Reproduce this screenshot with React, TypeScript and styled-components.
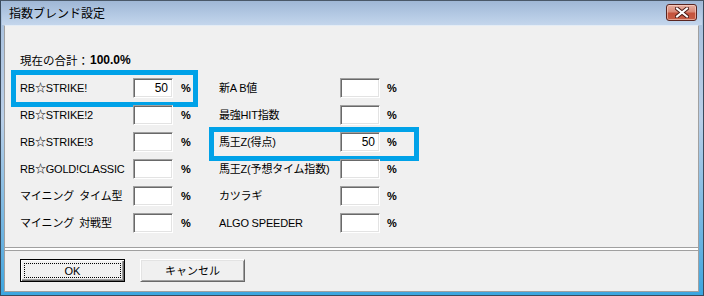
import React from "react";
import styled, { createGlobalStyle } from "styled-components";

const Global = createGlobalStyle`
  html, body { margin: 0; padding: 0; background: #ffffff; }
  body { width: 704px; height: 296px; overflow: hidden; }
  * { box-sizing: border-box; }
`;

const FONT = `"Liberation Sans", "Noto Sans CJK JP", sans-serif`;

const Frame = styled.div`
  width: 704px;
  height: 296px;
  display: flex;
  flex-direction: column;
  padding: 0 4px 3px 3px;
  background: linear-gradient(to bottom, #a7bfdc 0%, #b9cfe8 40%, #63b0e0 85%, #3ba6e0 100%);
  border: 1px solid #3a4a5c;
  border-top-color: #4a5868;
  font-family: ${FONT};
  font-size: 12px;
  color: #000;
`;

const TitleBar = styled.div`
  height: 24px;
  flex: 0 0 24px;
  margin: 0 -3px 0 -2px;
  padding: 0 5px 0 7px;
  display: flex;
  align-items: center;
  justify-content: space-between;
  background: linear-gradient(to bottom, #9fb7d5 0%, #b1c7e2 50%, #c4d6ec 100%);
`;

const Title = styled.span`
  font-family: "Noto Sans CJK JP", sans-serif;
  font-size: 12px;
  color: #000;
  line-height: 14px;
  margin-top: -1px;
`;

const CloseButton = styled.div`
  width: 31px;
  height: 17px;
  margin-top: -2px;
  border: 1px solid #5a2520;
  border-radius: 3px;
  background: linear-gradient(to bottom, #e7aea0 0%, #d98a78 45%, #c4523c 55%, #c65d45 100%);
  box-shadow: inset 0 0 0 1px rgba(255, 220, 210, 0.55);
  display: flex;
  align-items: center;
  justify-content: center;
`;

const Client = styled.div`
  flex: 1;
  display: flex;
  flex-direction: column;
  background: #f0f0f0;
  border: 1px solid #a0a0a0;
  border-top: 1px solid #e4ecf5;
`;

const Content = styled.div`
  flex: 1;
  padding: 27px 0 0 15px;
`;

const Summary = styled.div`
  font-family: "Noto Sans CJK JP", sans-serif;
  font-size: 11.5px;
  line-height: 14px;
  height: 14px;
  display: flex;
  align-items: center;
`;

const Total = styled.b`
  font-family: ${FONT};
  font-size: 12px;
  font-weight: bold;
  margin-left: 1px;
`;

const Columns = styled.div`
  margin-top: 11px;
  display: flex;
`;

const Column = styled.div<{ $width: number }>`
  width: ${(p) => p.$width}px;
  display: flex;
  flex-direction: column;
  gap: 7px;
`;

type Box = { t: number; r: number; b: number; l: number };

const Row = styled.div<{ $label: number; $gap: number; $hl?: Box }>`
  position: relative;
  height: 20px;
  display: grid;
  grid-template-columns: ${(p) => p.$label}px 40px auto;
  align-items: center;
  &::after {
    content: "";
    display: ${(p) => (p.$hl ? "block" : "none")};
    position: absolute;
    top: ${(p) => p.$hl?.t ?? 0}px;
    right: ${(p) => p.$hl?.r ?? 0}px;
    bottom: ${(p) => p.$hl?.b ?? 0}px;
    left: ${(p) => p.$hl?.l ?? 0}px;
    border: 5px solid #00a2e8;
    pointer-events: none;
  }
  & > span:last-child {
    padding-left: ${(p) => p.$gap}px;
  }
`;

const Label = styled.span`
  white-space: pre;
  line-height: 14px;
  font-family: ${FONT};
  font-size: 11px;
  letter-spacing: -0.2px;
`;

const Field = styled.div`
  width: 40px;
  height: 20px;
  background: #fff;
  border: 1px solid;
  border-color: #a0a0a0 #ffffff #ffffff #a0a0a0;
  box-shadow: inset 1px 1px 0 #696969, inset -1px -1px 0 #e3e3e3;
  text-align: right;
  padding: 0 4px 0 0;
  line-height: 18px;
  font-size: 12px;
`;

const Percent = styled.span`
  line-height: 14px;
  font-weight: bold;
  font-size: 11px;
`;

const Separator = styled.div`
  height: 4px;
  border-top: 1px solid #a0a0a0;
  border-bottom: 1px solid #a0a0a0;
  background: #ffffff;
`;

const ButtonBar = styled.div`
  height: 40px;
  padding: 8px 0 0 15px;
  display: flex;
  gap: 15px;
  align-items: flex-start;
`;

const Button = styled.div<{ $default?: boolean }>`
  position: relative;
  width: 105px;
  height: 23px;
  background: #f0f0f0;
  display: flex;
  align-items: center;
  justify-content: center;
  font-family: ${FONT};
  font-size: 11px;
  border: 1px solid;
  border-color: ${(p) => (p.$default ? "#000 #000 #000 #000" : "#ffffff #696969 #696969 #ffffff")};
  box-shadow: ${(p) =>
    p.$default
      ? "inset 1px 1px 0 #ffffff, inset -1px -1px 0 #696969, inset -2px -2px 0 #a0a0a0"
      : "inset 1px 1px 0 #e3e3e3, inset -1px -1px 0 #a0a0a0"};
  &::after {
    content: "";
    display: ${(p) => (p.$default ? "block" : "none")};
    position: absolute;
    top: 3px;
    left: 3px;
    right: 3px;
    bottom: 3px;
    border: 1px dotted #000;
  }
`;

const ButtonText = styled.span`
  line-height: 14px;
`;

type Item = { label: string; value?: string; hl?: Box };

const left: Item[] = [
  { label: "RB☆STRIKE!", value: "50", hl: { t: -8, r: 21, b: -9, l: -9 } },
  { label: "RB☆STRIKE!2" },
  { label: "RB☆STRIKE!3" },
  { label: "RB☆GOLD!CLASSIC" },
  { label: "マイニング\u2002タイム型" },
  { label: "マイニング\u2002対戦型" },
];

const right: Item[] = [
  { label: "新A B値" },
  { label: "最強HIT指数" },
  { label: "馬王Z(得点)", value: "50", hl: { t: -5, r: -1, b: -9, l: -10 } },
  { label: "馬王Z(予想タイム指数)" },
  { label: "カツラギ" },
  { label: "ALGO SPEEDER" },
];

const CloseIcon = () => (
  <svg width="14" height="11" viewBox="0 0 14 11">
    <path d="M2 1.5 L12 9.5 M12 1.5 L2 9.5" stroke="#4a1a14" strokeWidth="4" strokeLinecap="square" />
    <path d="M2 1.5 L12 9.5 M12 1.5 L2 9.5" stroke="#ffffff" strokeWidth="2" strokeLinecap="square" />
  </svg>
);

export default function App() {
  return (
    <>
      <Global />
      <Frame>
        <TitleBar>
          <Title>指数ブレンド設定</Title>
          <CloseButton>
            <CloseIcon />
          </CloseButton>
        </TitleBar>
        <Client>
          <Content>
            <Summary>
              現在の合計：<Total>100.0%</Total>
            </Summary>
            <Columns>
              <Column $width={199}>
                {left.map((it) => (
                  <Row key={it.label} $label={113} $gap={8} $hl={it.hl}>
                    <Label>{it.label}</Label>
                    <Field>{it.value ?? ""}</Field>
                    <Percent>%</Percent>
                  </Row>
                ))}
              </Column>
              <Column $width={199}>
                {right.map((it) => (
                  <Row key={it.label} $label={121} $gap={7} $hl={it.hl}>
                    <Label>{it.label}</Label>
                    <Field>{it.value ?? ""}</Field>
                    <Percent>%</Percent>
                  </Row>
                ))}
              </Column>
            </Columns>
          </Content>
          <Separator />
          <ButtonBar>
            <Button $default>
              <ButtonText>OK</ButtonText>
            </Button>
            <Button>
              <ButtonText>キャンセル</ButtonText>
            </Button>
          </ButtonBar>
        </Client>
      </Frame>
    </>
  );
}
